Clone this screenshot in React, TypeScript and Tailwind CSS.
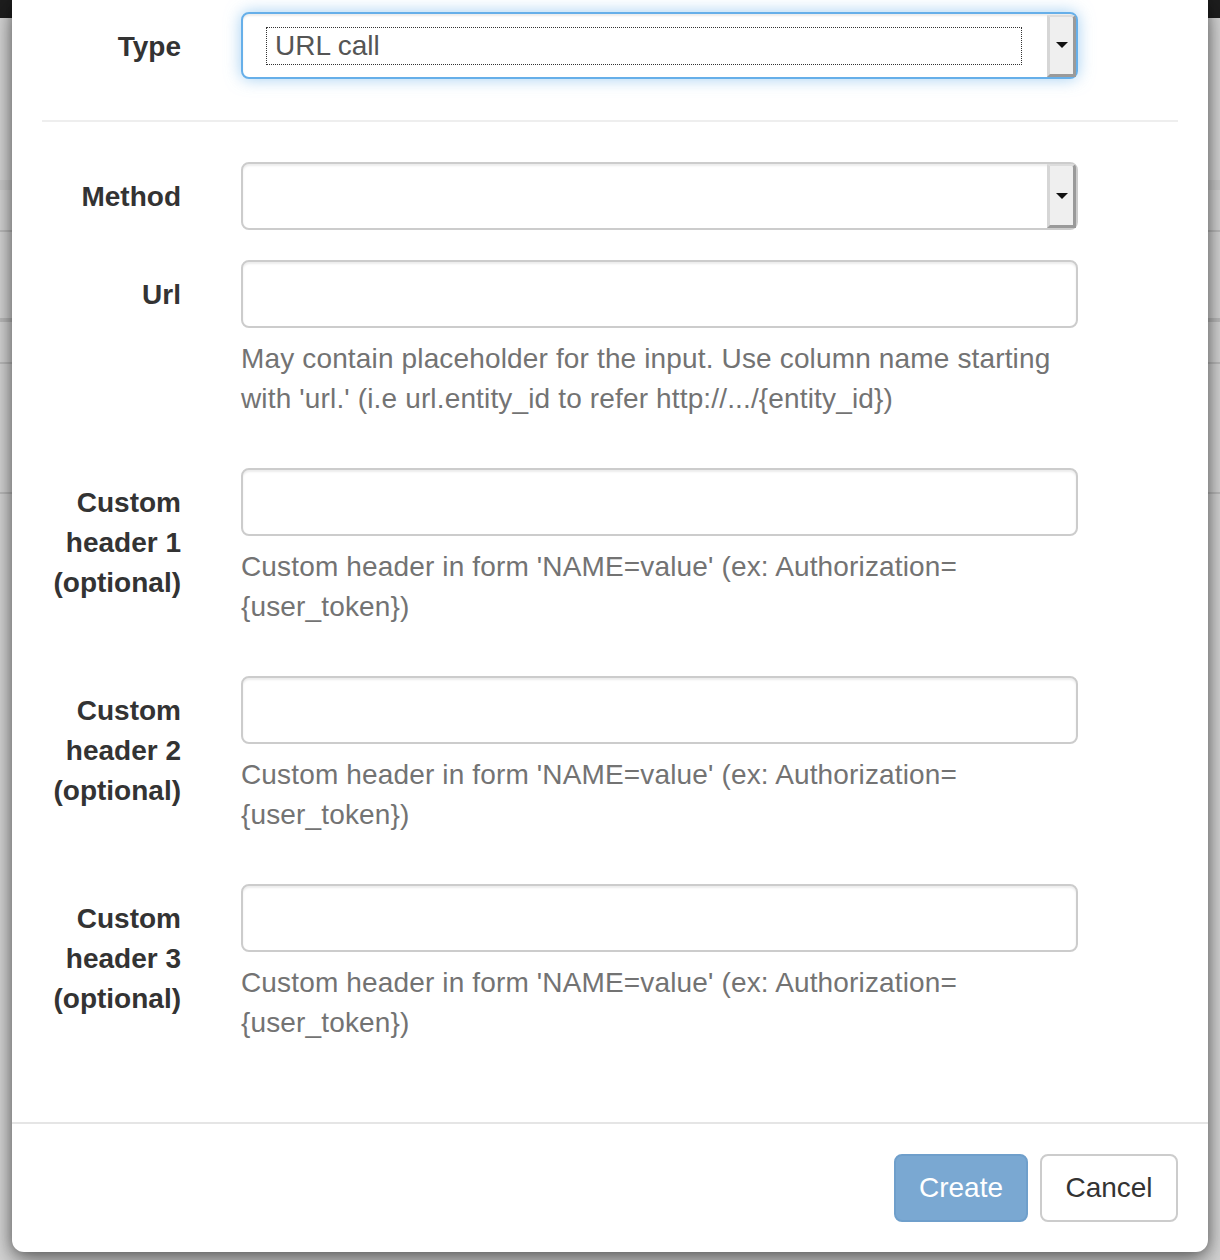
import React from "react";

const font = { fontFamily: '"Liberation Sans", Arial, Helvetica, sans-serif' };

function Label({ children }: { children: React.ReactNode }) {
  return (
    <div className="w-[199px] shrink-0 px-[30px] pt-[15px] text-right text-[28px] leading-[40px] font-bold text-[#333333]">
      {children}
    </div>
  );
}

function Arrow() {
  return (
    <div className="flex h-full w-[29px] shrink-0 items-center justify-center rounded-tr-[4px] border-t-2 border-l-[3px] border-r-[3px] border-b-[3px] border-t-[#dcdcdc] border-l-[#d6d6d6] border-r-[#9a9a9a] border-b-[#9a9a9a] bg-[#efefef]">
      <svg width="12" height="8" viewBox="0 0 12 8">
        <path d="M0 1 L12 1 L6 7 Z" fill="#111" />
      </svg>
    </div>
  );
}

function TextInput() {
  return (
    <div className="h-[68px] w-full rounded-[8px] border-2 border-[#cccccc] bg-white shadow-[inset_0_2px_2px_rgba(0,0,0,0.075)]" />
  );
}

function Help({ lines }: { lines: string[] }) {
  return (
    <div className="mt-[11px] mb-[19px] text-[28px] leading-[40px] tracking-[0.15px] text-[#737373]">
      {lines.map((l, i) => (
        <div key={i} className="whitespace-pre">
          {l}
        </div>
      ))}
    </div>
  );
}

function HeaderGroup({ n }: { n: number }) {
  return (
    <div className="mb-[30px] flex">
      <Label>
        Custom
        <br />
        header {n}
        <br />
        (optional)
      </Label>
      <div className="w-[897px] px-[30px]">
        <TextInput />
        <Help
          lines={[
            "Custom header in form 'NAME=value' (ex: Authorization=",
            "{user_token})",
          ]}
        />
      </div>
    </div>
  );
}

export default function App() {
  return (
    <div
      className="relative h-[1260px] w-[1220px] overflow-hidden bg-[#d6d6d6]"
      style={font}
    >
      {/* backdrop page hints */}
      <div className="absolute inset-x-0 top-0 h-[18px] bg-[#1e1e1e]" />
      <div className="absolute inset-x-0 top-[180px] h-[10px] bg-[#cdcdcd]" />
      <div className="absolute inset-x-0 top-[230px] h-[2px] bg-[#bdbdbd]" />
      <div className="absolute inset-x-0 top-[318px] h-[4px] bg-[#bcbcbc]" />
      <div className="absolute inset-x-0 top-[362px] h-[2px] bg-[#bdbdbd]" />
      <div className="absolute inset-x-0 top-[492px] h-[2px] bg-[#bdbdbd]" />

      <div className="relative ml-[12px] w-[1196px] rounded-b-[12px] bg-white shadow-[0_0_12px_rgba(0,0,0,0.3),0_10px_24px_rgba(0,0,0,0.45)]">
        <div className="pt-[12px] pb-[30px]">
          {/* Type */}
          <div className="flex">
            <Label>Type</Label>
            <div className="w-[897px] px-[30px]">
              <div className="flex h-[67px] items-center rounded-[8px] border-2 border-[#66afe9] bg-white pl-[23px] shadow-[inset_0_2px_2px_rgba(0,0,0,0.075),0_0_16px_rgba(102,175,233,0.6)]">
                <div className="flex h-[38px] flex-1 items-center border border-dotted border-[#333] pl-[8px] text-[28px] text-[#555555]">
                  URL call
                </div>
                <div className="ml-[25px] h-[62px] self-center">
                  <Arrow />
                </div>
              </div>
            </div>
          </div>

          <div className="mx-[30px] mt-[41px] mb-[40px] border-t-2 border-[#eeeeee]" />

          {/* Method */}
          <div className="mb-[30px] flex">
            <Label>Method</Label>
            <div className="w-[897px] px-[30px]">
              <div className="flex h-[68px] items-center justify-end rounded-[8px] border-2 border-[#cccccc] bg-white shadow-[inset_0_2px_2px_rgba(0,0,0,0.075)]">
                <div className="h-[64px]">
                  <Arrow />
                </div>
              </div>
            </div>
          </div>

          {/* Url */}
          <div className="mb-[30px] flex">
            <Label>Url</Label>
            <div className="w-[897px] px-[30px]">
              <TextInput />
              <Help
                lines={[
                  "May contain placeholder for the input. Use column name starting",
                  "with 'url.' (i.e url.entity_id to refer http://.../{entity_id})",
                ]}
              />
            </div>
          </div>

          <HeaderGroup n={1} />
          <HeaderGroup n={2} />
          <HeaderGroup n={3} />
        </div>

        {/* footer */}
        <div className="flex justify-end gap-[12px] border-t-2 border-[#e5e5e5] p-[30px]">
          <button className="flex h-[68px] w-[134px] items-center justify-center rounded-[8px] border-2 border-[#6f9fcb] bg-[#7aa8d2] text-[28px] text-white">
            Create
          </button>
          <button className="flex h-[68px] w-[138px] items-center justify-center rounded-[8px] border-2 border-[#cccccc] bg-white text-[28px] text-[#333333]">
            Cancel
          </button>
        </div>
      </div>
    </div>
  );
}
